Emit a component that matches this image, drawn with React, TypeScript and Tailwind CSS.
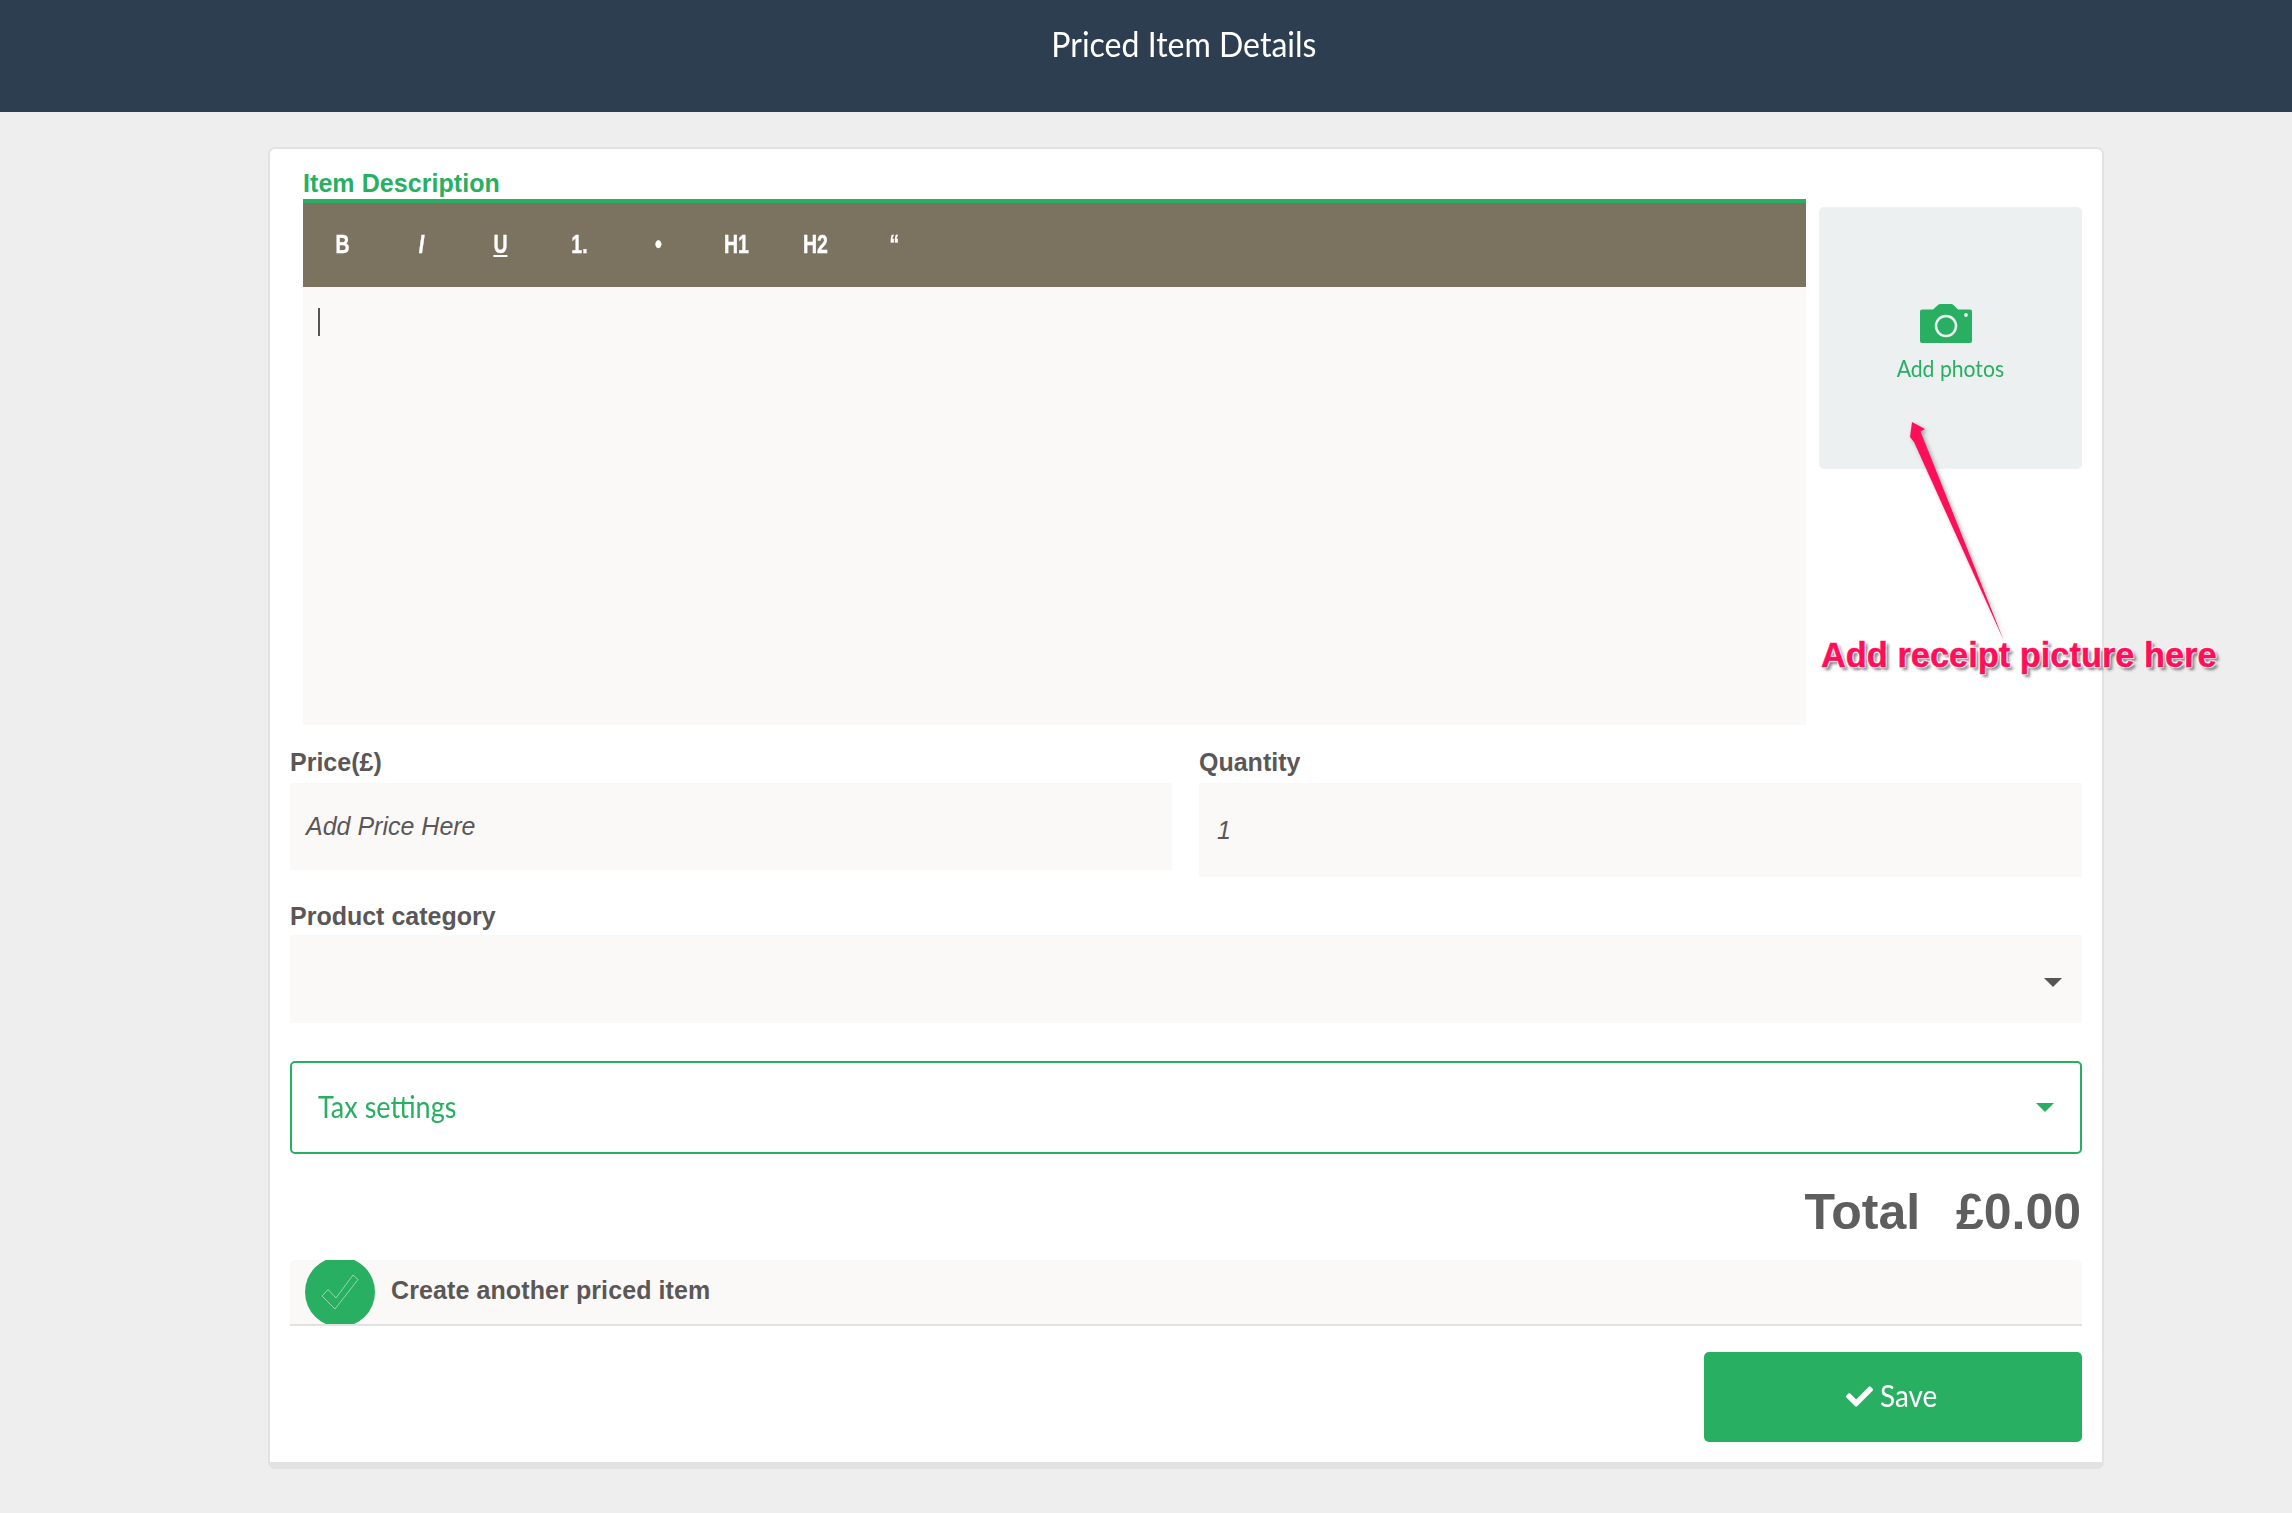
import { FaCheck } from "react-icons/fa";

const tools: { label: string; className?: string }[] = [
  { label: "B" },
  { label: "I", className: "italic" },
  { label: "U", className: "underline" },
  { label: "1." },
  { label: "•" },
  { label: "H1" },
  { label: "H2" },
  { label: "“" },
];

function Label({ children }: { children: string }) {
  return <div className="h-[26px] text-[25px] leading-[26px] font-bold text-[#5b5757]">{children}</div>;
}

function Camera() {
  return (
    <svg width="52" height="39" viewBox="0 0 52 39">
      <path
        d="M2 5.5H13L18 1Q19 0 20.500 0H31Q32.500 0 33.500 1L38 5.500H50Q52 5.500 52 7.500V37Q52 39 50 39H2Q0 39 0 37V7.500Q0 5.500 2 5.500Z"
        fill="#29af62"
      />
      <circle cx="26" cy="22" r="10" fill="none" stroke="#ecf0f1" strokeWidth="2.5" />
      <circle cx="46" cy="11" r="1.900" fill="#ecf0f1" />
    </svg>
  );
}

export default function App() {
  return (
    <div className="relative min-h-[1513px] overflow-hidden bg-[#eeeeee] font-['Liberation_Sans',Arial,sans-serif] text-[#5b5757]">
      <header className="flex h-[112px] justify-center bg-[#2c3e50] pt-[23px] pl-[76px] font-['Lato',sans-serif] text-[35px] leading-[40px] text-white">
        <span className="inline-block scale-x-[0.915] whitespace-nowrap">Priced Item Details</span>
      </header>

      <main className="mt-[35px] ml-[268px] h-[1322px] w-[1836px] rounded-[7px] border-x-2 border-t-2 border-b-[7px] border-[#e2e2e2] bg-white pr-[20px] pl-[20px]">
        <div className="flex gap-[13px] pl-[13px]">
          <div className="w-[1503px]">
            <div className="h-[50px] pt-[20px] text-[25px] leading-[29px] font-bold tracking-[0.06px] text-[#29af62]">Item Description</div>
            <div className="flex h-[88px] items-center border-t-4 border-[#29af62] bg-[#7b725f] text-white">
              {tools.map((t) => (
                <span key={t.label} className={`w-[78.900px] scale-x-[0.78] text-center text-[25px] font-bold [-webkit-text-stroke:0.4px_#ffffff] ${t.className ?? ""}`}>
                  {t.label}
                </span>
              ))}
            </div>
            <div className="h-[438px] bg-[#faf9f7] pt-[21px] pl-[15px]">
              <div className="h-[28px] w-[2px] bg-[#555555]" />
            </div>
          </div>
          <div className="mt-[58px] flex h-[262px] w-[263px] flex-col items-center rounded-[5px] bg-[#ecf0f1] pt-[97px]">
            <div className="-ml-[9px]">
              <Camera />
            </div>
            <div className="mt-[11px] scale-x-[0.92] font-['Lato',sans-serif] text-[23px] leading-[28px] whitespace-nowrap text-[#29af62]">Add photos</div>
          </div>
        </div>

        <div className="mt-[24px] flex gap-[27px]">
          <div className="w-[882px]">
            <Label>Price(£)</Label>
            <div className="mt-[8px] flex h-[87px] items-center bg-[#faf9f7] pl-[16px] text-[25px] italic">Add Price Here</div>
          </div>
          <div className="w-[883px]">
            <Label>Quantity</Label>
            <div className="mt-[8px] flex h-[94px] items-center bg-[#faf9f7] pt-[2px] pl-[18px] text-[25px] italic">1</div>
          </div>
        </div>

        <div className="mt-[26px]">
          <Label>Product category</Label>
          <div className="mt-[6px] flex h-[88px] items-center justify-end bg-[#faf9f7] pt-[7px] pr-[20px]">
            <div className="h-0 w-0 border-x-[9px] border-t-[9px] border-x-transparent border-t-[#555555]" />
          </div>
        </div>

        <div className="mt-[38px] flex h-[93px] items-center justify-between rounded-[5px] border-2 border-[#29af62] pr-[26px] pl-[26px] font-['Lato',sans-serif] text-[30px] text-[#29af62]">
          <span className="-mt-[2px] inline-block origin-left scale-x-[0.9] whitespace-nowrap">Tax settings</span>
          <div className="h-0 w-0 border-x-[9px] border-t-[9px] border-x-transparent border-t-[#29af62]" />
        </div>

        <div className="mt-[31px] flex h-[55px] justify-end pr-[1px] text-[50px] leading-[55px] font-bold whitespace-pre text-[#5e5e5e] [word-spacing:-2px]">
          Total{"   "}£0.00
        </div>

        <div className="mt-[20px] flex h-[66px] items-center overflow-hidden rounded-t-[5px] border-b-2 border-[#e2e2e2] bg-[#faf9f7] pl-[15px]">
          <div className="flex h-[70px] w-[70px] shrink-0 items-center justify-center rounded-full bg-[#29af62]">
            <svg width="38" height="36" viewBox="0 0 38 36" fill="none" stroke="#ffffff" strokeOpacity="0.5" strokeWidth="1">
              <path d="M1 22L7 15.500L15 24L32 1L37 5.500L14 35Z" />
            </svg>
          </div>
          <span className="-mt-[2px] ml-[16px] text-[25px] font-bold tracking-[0.1px]">Create another priced item</span>
        </div>

        <div className="mt-[26px] flex justify-end">
          <button className="flex h-[90px] w-[378px] items-center justify-center gap-[7px] rounded-[5px] bg-[#29af62] pb-[4px] pl-[4px] font-['Lato',sans-serif] text-[31px] text-white">
            <FaCheck className="mt-[2px] text-[27px]" />
            <span className="inline-block origin-left scale-x-[0.9]">Save</span>
          </button>
        </div>
      </main>

      <svg className="pointer-events-none absolute top-[415px] left-[1900px] drop-shadow-[2px_2px_2px_rgba(0,0,0,0.35)]" width="110" height="230" viewBox="0 0 110 230">
        <path d="M12 7L25 14L20.500 16.500L104 226L14 27L10 22Z" fill="#ff0f5a" />
      </svg>
      <div className="absolute top-[633px] left-[1821px] text-[34.400px] leading-[44px] font-bold whitespace-nowrap text-[#ff0f5a] [-webkit-text-stroke:0.5px_#ff0f5a] [text-shadow:-1px_-1px_1px_#ffffff,1px_-1px_1px_#ffffff,-1px_1px_1px_#ffffff,1px_1px_1px_#ffffff,3px_3px_3px_rgba(0,0,0,0.5)]">
        Add receipt picture here
      </div>
    </div>
  );
}
